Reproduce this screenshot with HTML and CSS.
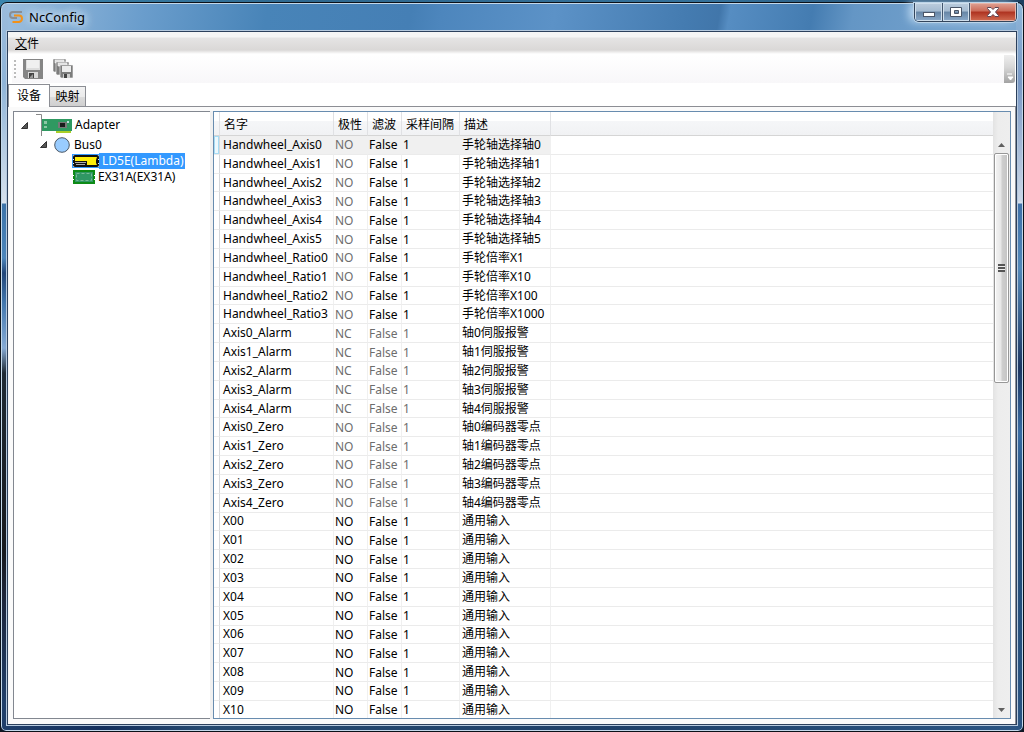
FILE: index.html
```html
<!DOCTYPE html>
<html lang="zh-CN">
<head>
<meta charset="utf-8">
<title>NcConfig</title>
<link rel="stylesheet" href="styles.css">
</head>
<body>
<div class="window">
  <header class="titlebar">
    <svg class="logo" viewBox="0 0 14 14" fill="none" stroke-width="2"><path d="M13 2H4Q1 2 1 5T4 8H8" stroke="#8b8e93"/><path d="M5 5.500H10Q13 5.500 13 8.500T10 12H3.500" stroke="#f29118"/></svg>
    <h1 class="title">NcConfig</h1>
    <div class="controls">
      <button class="ctl min" aria-label="最小化"><svg width="14" height="12"><rect x="1.500" y="6.500" width="11" height="4" fill="#fff" stroke="#4a5567"/></svg></button>
      <button class="ctl" aria-label="最大化"><svg width="14" height="12"><path d="M1.500 1.500h11v9h-11zM5.500 4.500v3h4v-3z" fill="#fff" fill-rule="evenodd" stroke="#4a5567"/></svg></button>
      <button class="ctl close" aria-label="关闭"><svg width="14" height="12"><path d="M1.500 1.500H5L7 3.500 9 1.500h3.500v1L9.500 6l3 3.500v1H9L7 8.500l-2 2H1.500v-1l3-3.500-3-3.500z" fill="#fff" stroke="#5d4553"/></svg></button>
    </div>
  </header>
  <main class="client">
    <nav class="menubar"><button class="menu"><u>文</u>件</button></nav>
    <div class="toolbar">
      <span class="grip"></span>
      <button class="tool" aria-label="保存"><svg width="20" height="20"><path d="M0 0h20v20H2l-2-2z" fill="#858585"/><path d="M3 1h14v10H3z" fill="#ddd"/><path d="M4 1h12v8H4z" fill="#f0f0f0"/><path d="M5 13h10v6H5z" fill="#d8d8d8"/><path d="M6 14h5v5H6z" fill="#444"/><path d="M7 18l3-3v4H7z" fill="#999"/></svg></button>
      <button class="tool" aria-label="全部保存"><svg width="20" height="20"><g fill="#7c7c7c" stroke="#f8f8f8" stroke-width=".6"><path d="M0 0h13v13H1l-1-1z"/><path d="M2 1h9v3H2z" fill="#ddd"/><path d="M3 3h13v13H4l-1-1z"/><path d="M5 4h9v3H5z" fill="#ddd"/><path d="M7 6h13v13H8l-1-1z"/></g><path d="M9 7h9v6H9z" fill="#ececec"/><path d="M10 15h7v4h-7z" fill="#ccc"/><path d="M11 15h3v4h-3z" fill="#444"/></svg></button>
      <button class="overflow" aria-label="更多"><svg width="8" height="8"><path d="M1 1h5M2 4h5L4.500 7z" fill="#fff" stroke="#fff"/></svg></button>
    </div>
    <div class="tabs" role="tablist">
      <button class="tab active" role="tab" aria-selected="true">设备</button>
      <button class="tab" role="tab" aria-selected="false">映射</button>
    </div>
    <div class="pane">
      <ul class="tree">
        <li class="node root"><svg class="arrow" viewBox="0 0 7 7"><path d="M6.500 .5v6h-6z" fill="#555" stroke="#333"/></svg>
          <svg class="card" viewBox="0 0 36 22"><path d="M0 .5h5.500V22" fill="none" stroke="#888"/><path d="M6 5h30v12H6z" fill="#2f9961"/><path d="M20 17h15v2H20z" fill="#a9cf28"/><path d="M8 7h3v3H8zM8 12h3v2H8z" fill="#8cc8a4"/><path d="M22 8h9v6h-9z" fill="#777"/><path d="M24 9h5v4h-5z" fill="#191b1b"/><path d="M31 7h2v2h-2z" fill="#bdd"/></svg><span class="label">Adapter</span></li>
        <li class="node bus"><svg class="arrow" viewBox="0 0 7 7"><path d="M6.500 .5v6h-6z" fill="#555" stroke="#333"/></svg>
          <svg class="circle" viewBox="0 0 16 16"><circle cx="8" cy="8" r="7.300" fill="#99ccff" stroke="#4d5966"/></svg><span class="label">Bus0</span></li>
        <li class="node leaf selected"><svg class="drive" viewBox="0 0 26 12"><rect width="26" height="12" rx="2" fill="#111"/><path d="M2 2h22l-1 3v3l1 2H14V6H2z" fill="#ffee08"/><path d="M2 7h11v1H2zM3 9h9v1H3z" fill="#aaa"/><path d="M0 4h1v1H0zM0 8h1v1H0zM25 4h1v1h-1zM25 8h1v1h-1z" fill="#eee"/></svg><span class="label">LD5E(Lambda)</span></li>
        <li class="node leaf"><svg class="module" viewBox="0 0 22 14"><path d="M0 0h22v14H0z" fill="#0e8b16"/><path d="M2 2h18v10H2z" fill="#2f9764"/><path d="M3.500 3.500h15v7h-15z" fill="none" stroke="#78b994" stroke-dasharray="3 2"/><path d="M0 5h1v1H0zM0 9h1v1H0zM21 5h1v1h-1zM21 9h1v1h-1z" fill="#fff"/></svg><span class="label">EX31A(EX31A)</span></li>
      </ul>
      <div class="splitter"></div>
      <div class="grid">
        <div class="tablebox">
        <table class="signals">
          <colgroup><col class="c-head"><col class="c-name"><col class="c-pol"><col class="c-fil"><col class="c-int"><col class="c-desc"><col></colgroup>
          <thead><tr><th></th><th>名字</th><th>极性</th><th>滤波</th><th>采样间隔</th><th>描述</th><th></th></tr></thead>
          <tbody>
            <tr class="half current"><td></td><td>Handwheel_Axis0</td><td>NO</td><td>False</td><td>1</td><td>手轮轴选择轴0</td><td></td></tr>
            <tr class="half"><td></td><td>Handwheel_Axis1</td><td>NO</td><td>False</td><td>1</td><td>手轮轴选择轴1</td><td></td></tr>
            <tr class="half"><td></td><td>Handwheel_Axis2</td><td>NO</td><td>False</td><td>1</td><td>手轮轴选择轴2</td><td></td></tr>
            <tr class="half"><td></td><td>Handwheel_Axis3</td><td>NO</td><td>False</td><td>1</td><td>手轮轴选择轴3</td><td></td></tr>
            <tr class="half"><td></td><td>Handwheel_Axis4</td><td>NO</td><td>False</td><td>1</td><td>手轮轴选择轴4</td><td></td></tr>
            <tr class="half"><td></td><td>Handwheel_Axis5</td><td>NO</td><td>False</td><td>1</td><td>手轮轴选择轴5</td><td></td></tr>
            <tr class="half"><td></td><td>Handwheel_Ratio0</td><td>NO</td><td>False</td><td>1</td><td>手轮倍率X1</td><td></td></tr>
            <tr class="half"><td></td><td>Handwheel_Ratio1</td><td>NO</td><td>False</td><td>1</td><td>手轮倍率X10</td><td></td></tr>
            <tr class="half"><td></td><td>Handwheel_Ratio2</td><td>NO</td><td>False</td><td>1</td><td>手轮倍率X100</td><td></td></tr>
            <tr class="half"><td></td><td>Handwheel_Ratio3</td><td>NO</td><td>False</td><td>1</td><td>手轮倍率X1000</td><td></td></tr>
            <tr class="locked"><td></td><td>Axis0_Alarm</td><td>NC</td><td>False</td><td>1</td><td>轴0伺服报警</td><td></td></tr>
            <tr class="locked"><td></td><td>Axis1_Alarm</td><td>NC</td><td>False</td><td>1</td><td>轴1伺服报警</td><td></td></tr>
            <tr class="locked"><td></td><td>Axis2_Alarm</td><td>NC</td><td>False</td><td>1</td><td>轴2伺服报警</td><td></td></tr>
            <tr class="locked"><td></td><td>Axis3_Alarm</td><td>NC</td><td>False</td><td>1</td><td>轴3伺服报警</td><td></td></tr>
            <tr class="locked"><td></td><td>Axis4_Alarm</td><td>NC</td><td>False</td><td>1</td><td>轴4伺服报警</td><td></td></tr>
            <tr class="locked"><td></td><td>Axis0_Zero</td><td>NO</td><td>False</td><td>1</td><td>轴0编码器零点</td><td></td></tr>
            <tr class="locked"><td></td><td>Axis1_Zero</td><td>NO</td><td>False</td><td>1</td><td>轴1编码器零点</td><td></td></tr>
            <tr class="locked"><td></td><td>Axis2_Zero</td><td>NO</td><td>False</td><td>1</td><td>轴2编码器零点</td><td></td></tr>
            <tr class="locked"><td></td><td>Axis3_Zero</td><td>NO</td><td>False</td><td>1</td><td>轴3编码器零点</td><td></td></tr>
            <tr class="locked"><td></td><td>Axis4_Zero</td><td>NO</td><td>False</td><td>1</td><td>轴4编码器零点</td><td></td></tr>
            <tr><td></td><td>X00</td><td>NO</td><td>False</td><td>1</td><td>通用输入</td><td></td></tr>
            <tr><td></td><td>X01</td><td>NO</td><td>False</td><td>1</td><td>通用输入</td><td></td></tr>
            <tr><td></td><td>X02</td><td>NO</td><td>False</td><td>1</td><td>通用输入</td><td></td></tr>
            <tr><td></td><td>X03</td><td>NO</td><td>False</td><td>1</td><td>通用输入</td><td></td></tr>
            <tr><td></td><td>X04</td><td>NO</td><td>False</td><td>1</td><td>通用输入</td><td></td></tr>
            <tr><td></td><td>X05</td><td>NO</td><td>False</td><td>1</td><td>通用输入</td><td></td></tr>
            <tr><td></td><td>X06</td><td>NO</td><td>False</td><td>1</td><td>通用输入</td><td></td></tr>
            <tr><td></td><td>X07</td><td>NO</td><td>False</td><td>1</td><td>通用输入</td><td></td></tr>
            <tr><td></td><td>X08</td><td>NO</td><td>False</td><td>1</td><td>通用输入</td><td></td></tr>
            <tr><td></td><td>X09</td><td>NO</td><td>False</td><td>1</td><td>通用输入</td><td></td></tr>
            <tr><td></td><td>X10</td><td>NO</td><td>False</td><td>1</td><td>通用输入</td><td></td></tr>
          </tbody>
        </table>
        </div>
        <div class="scrollbar">
          <button class="step" aria-label="向上滚动"><svg width="7" height="4"><path d="M0 4l3.500-4L7 4z" fill="#606060"/></svg></button>
          <div class="track"><div class="thumb"><span class="ridges"></span></div></div>
          <button class="step" aria-label="向下滚动"><svg width="7" height="4"><path d="M0 0h7L3.500 4z" fill="#606060"/></svg></button>
        </div>
      </div>
    </div>
  </main>
</div>
</body>
</html>
```
FILE: styles.css
```css
* { box-sizing: border-box; }
body {
  margin: 0;
  padding-top: 2px;
  height: 100vh;
  background: linear-gradient(90deg, #3b85ad, #2e688f 30%, #34719a 70%, #1c3f60) top / 100% 12px no-repeat, #101722;
  font: 12px/16px "Noto Sans", "Noto Sans CJK SC", sans-serif;
  color: #000;
}
button { margin: 0; padding: 0; border: 0; background: none; font: inherit; color: inherit; }
svg { display: block; flex: none; }

.window {
  height: 100%;
  display: flex;
  flex-direction: column;
  padding: 0 6px 6px;
  border: 1px solid #0c1118;
  border-radius: 7px 7px 6px 6px;
  box-shadow: inset 0 0 0 1px #c3d8ea;
  background:
    linear-gradient(180deg, #9cbcdc, #8fb4d8 80px, #d5e0ec 198px, #dde6f0 200px, #3c73a9 201px, #4d86bb 255px, #23477a 270px, #4277ae 300px, #86aad4 345px, #1f2a34 370px, #181a1e 550px, #1d2438 590px, #203f6a 700px) left / 7px 100% no-repeat,
    linear-gradient(180deg, #8fb7da, #7998c4 80px, #cbd7e7 198px, #dde6f0 200px, #3e70a8 201px, #5288b9 265px, #1c3662 365px, #386ba3 430px, #214b78 500px, #2a5482) right / 7px 100% no-repeat,
    linear-gradient(90deg, #203f6a, #142f5c 10%, #264a70 20%, #1f4068 60%, #2b5583) bottom / 100% 7px no-repeat,
    linear-gradient(100deg, #9dbfdf, #6a9dcc 14%, #4884b8 26%, #457fb5 40%, #4d86bd 43%, #5c92c7 54%, #447bb0 67%, #4176aa 70%, #568dc2 71%, #447cb1 79%, #6496c5 83%, #7faad2) top / 100% 40px no-repeat;
}
.titlebar { height: 28px; flex: none; display: flex; align-items: center; gap: 6px; padding-left: 2px; }
.logo { width: 14px; height: 14px; }
.title {
  margin: 0;
  font-size: 13px;
  line-height: 18px;
  font-weight: 400;
  text-shadow: 0 0 8px #d8e8f6, 0 0 8px #d8e8f6, 0 0 12px #d8e8f6;
}
.controls {
  display: flex;
  align-self: flex-start;
  margin-left: auto;
  height: 19px;
  border: 1px solid #33455c;
  border-top: 0;
  border-radius: 0 0 5px 5px;
  box-shadow: 0 0 0 1px #bcd4e8, -5px 0 8px #b9d5ee;
  overflow: hidden;
}
.ctl {
  width: 27px;
  display: grid;
  place-items: center;
  border-right: 1px solid #42566e;
  background: linear-gradient(#bccddd, #a4bad0 45%, #6685a5 50%, #8baaca);
  box-shadow: inset 0 0 0 1px #cfdeeb;
}
.min { width: 28px; }
.close { width: 46px; border: 0; background: linear-gradient(#dfa294, #cb6a57 45%, #ae3220 50%, #d16d52); box-shadow: inset 0 0 0 1px #e7b6aa; }

.client {
  flex: 1;
  min-height: 0;
  display: flex;
  flex-direction: column;
  border: 1px solid #2c405c;
  outline: 1px solid #b5c9de;
  background: #fff;
}
.menubar {
  flex: none;
  height: 22px;
  padding: 4px 7px;
  background: linear-gradient(#f5f5f5 5px, #e5e4e4 6px, #dad8d7 18px, #fff);
}
.menu { display: block; line-height: 16px; }
.toolbar {
  flex: none;
  height: 28px;
  margin: 1px 1px 1px 4px;
  display: flex;
  align-items: center;
  gap: 10px;
  padding-left: 2px;
  background: linear-gradient(#fff, #f8f7f9);
}
.grip { width: 2px; height: 18px; background: repeating-linear-gradient(#bcbcbc 0 2px, #fff 2px 4px); margin-right: -3px; }
.tool { width: 20px; height: 20px; }
.overflow {
  width: 11px;
  height: 28px;
  margin-left: auto;
  display: grid;
  place-items: end center;
  padding-bottom: 2px;
  border-radius: 0 3px 3px 0;
  background: linear-gradient(#eee, #d6d6d6 45%, #a3a3a3);
}
.tabs { flex: none; height: 22px; display: flex; align-items: flex-end; }
.tab {
  width: 36px;
  height: 20px;
  border: 1px solid #8c8e94;
  border-left: 0;
  border-bottom: 0;
  background: linear-gradient(#f2f2f2, #ebebeb 50%, #dcdcdc 51%, #cfcfcf);
}
.tab.active { width: 42px; height: 23px; margin-bottom: -1px; border-left: 1px solid #8c8e94; background: #fff; z-index: 1; padding-bottom: 1px; }
.pane {
  flex: 1;
  min-height: 0;
  display: flex;
  padding: 4px 4px 5px;
  border: 1px solid #8c8e94;
  border-bottom: 0;
  border-left-color: #f4f4f4;
  background: #fafafa;
}
.tree {
  width: 197px;
  flex: none;
  margin: 0;
  padding: 2px 0 0;
  list-style: none;
  border: 1px solid #828790;
  border-right: 0;
  background: #fff;
}
.node { display: flex; align-items: center; height: 16px; }
.root { height: 22px; padding-left: 7px; }
.bus { height: 17px; padding-left: 26px; }
.leaf { padding-left: 59px; }
.arrow { width: 7px; height: 7px; }
.card { width: 36px; height: 22px; margin: 0 3px 0 8px; }
.circle { width: 16px; height: 16px; margin: 0 4px 0 7px; }
.drive { width: 26px; height: 12px; }
.module { width: 22px; height: 14px; }
.leaf .label { padding: 0 1px 0 3px; }
.selected .drive { outline: 1px solid #3399ff; }
.selected .label { background: #3399ff; color: #fff; }
.splitter { width: 3px; flex: none; background: #f0f0f0; }
.grid { flex: 1; min-width: 0; display: flex; border: 1px solid #688caf; background: #fff; }
.tablebox { flex: 1; min-width: 0; overflow: hidden; }
.signals { width: 100%; height: calc(100% + 2px); table-layout: fixed; border-collapse: separate; border-spacing: 0; }
.c-head { width: 6px; }
.c-name { width: 114px; }
.c-pol, .c-fil { width: 34px; }
.c-int { width: 58px; }
.c-desc { width: 91px; }
.signals th {
  height: 24px;
  padding: 2px 0 0 4px;
  text-align: left;
  font-weight: 400;
  white-space: nowrap;
  border-right: 1px solid #e0e1e4;
  border-bottom: 1px solid #d5d5d5;
  background: linear-gradient(#fff, #fff 40%, #f5f6f8 41%, #f1f2f4);
}
.signals td {
  padding: 0 0 0 2px;
  line-height: 16px;
  white-space: nowrap;
  border-right: 1px solid #f0f0f0;
  border-bottom: 1px solid #ebebeb;
}
.signals td:nth-child(2) { padding-left: 3px; }
.signals td:nth-child(n+3):nth-child(-n+5) { padding: 1px 0 0 1px; }
.signals td:nth-child(1) { border-right-color: #d5d7da; }
.signals th:last-child, .signals td:last-child { border-right: 0; }
.half td:nth-child(3) { color: #6d6d6d; }
.locked td:nth-child(n+3):nth-child(-n+5) { color: #6d6d6d; }
.current td:nth-child(n+2):nth-child(-n+6) { background: #f0f0f0; }
.current td:first-child { box-shadow: inset 0 0 0 1px #a6dcf5; background: #edf8fd; }
.scrollbar {
  width: 17px;
  flex: none;
  display: flex;
  flex-direction: column;
  padding-top: 24px;
  background: linear-gradient(90deg, #e3e3e3, #ededed 30%, #eee);
}
.step { height: 17px; display: grid; place-items: center; }
.track { flex: 1; padding: 0 1px; }
.thumb {
  height: 42%;
  display: grid;
  place-items: center;
  border: 1px solid #979797;
  border-radius: 2px;
  box-shadow: inset 0 0 0 1px #fff;
  background: linear-gradient(90deg, #f4f4f4, #e6e6e6 48%, #cfcfcf 52%, #c3c3c3);
}
.ridges { width: 7px; height: 8px; background: repeating-linear-gradient(#555 0 2px, #eee 2px 3px); }
```
